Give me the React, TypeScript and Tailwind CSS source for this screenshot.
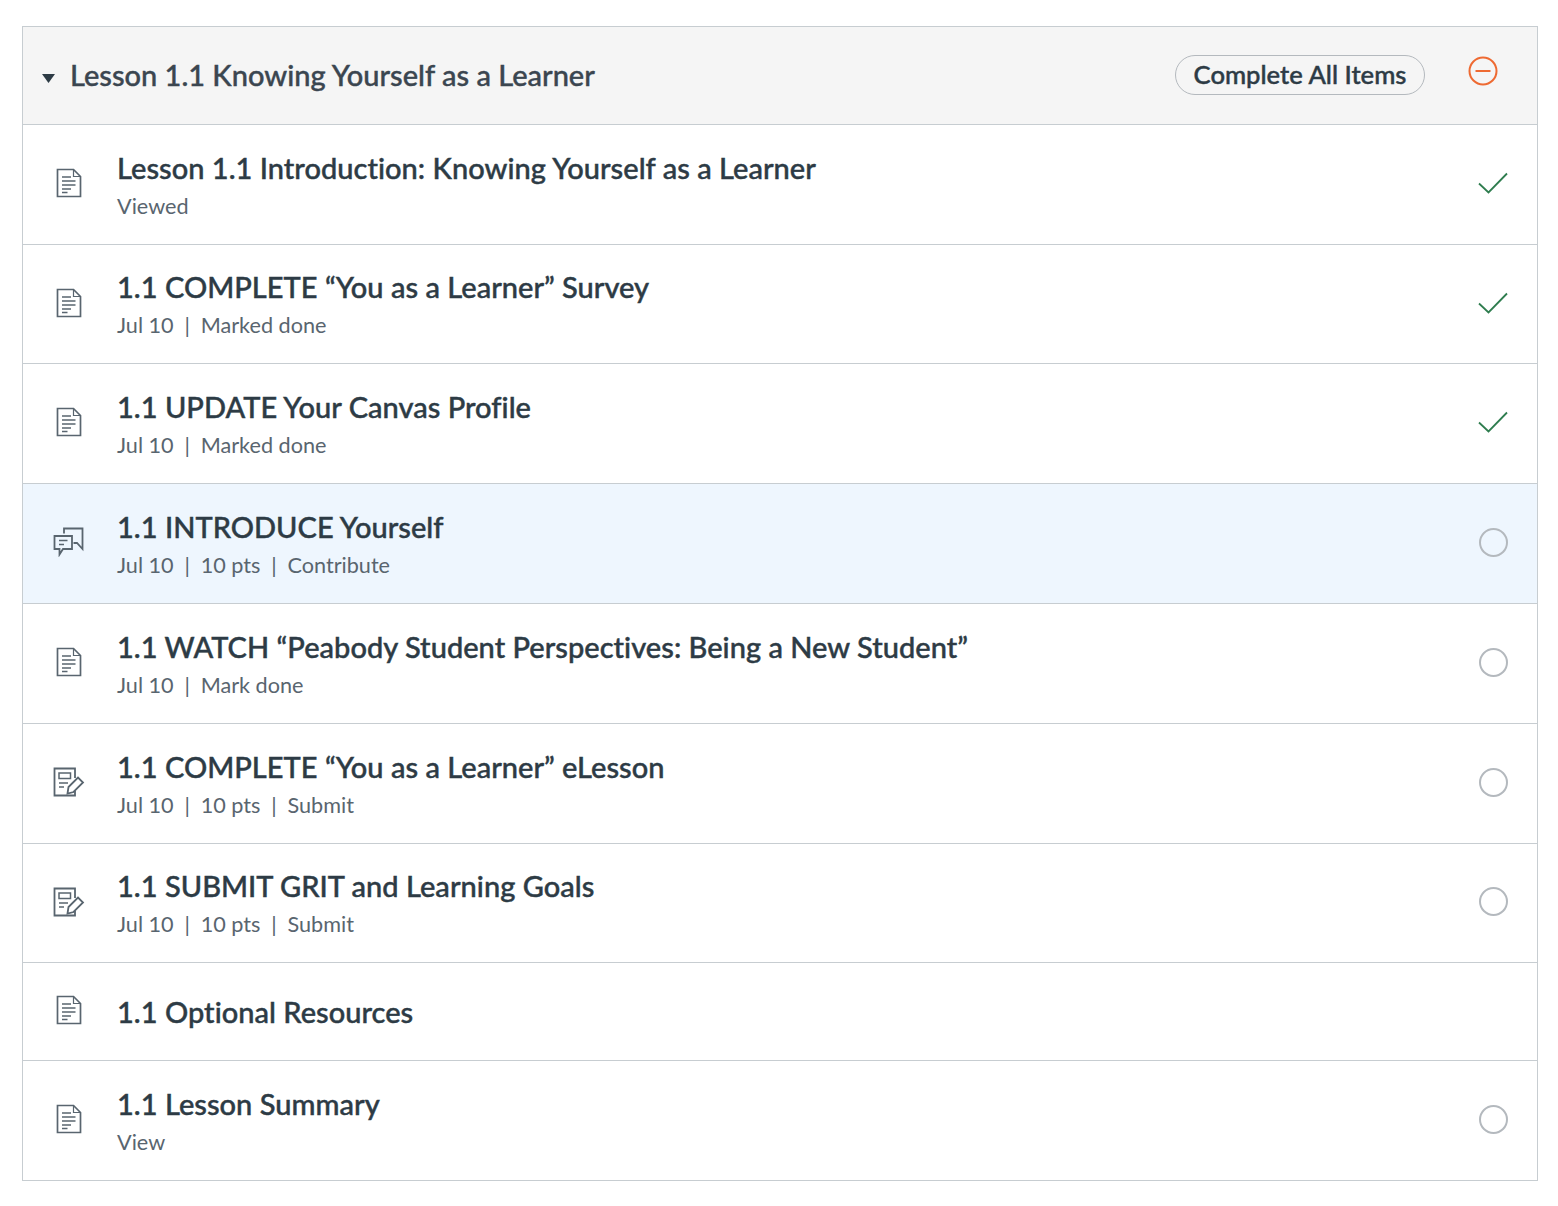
import React from 'react';

type Status = 'done' | 'open' | 'none';
type Kind = 'page' | 'discussion' | 'assignment';

interface Item {
  title: string;
  meta: string[];
  kind: Kind;
  status: Status;
  height: string;
  active?: boolean;
}

const items: Item[] = [
  { title: 'Lesson 1.1 Introduction: Knowing Yourself as a Learner', meta: ['Viewed'], kind: 'page', status: 'done', height: 'h-[120px]' },
  { title: '1.1 COMPLETE “You as a Learner” Survey', meta: ['Jul 10', 'Marked done'], kind: 'page', status: 'done', height: 'h-[119px]' },
  { title: '1.1 UPDATE Your Canvas Profile', meta: ['Jul 10', 'Marked done'], kind: 'page', status: 'done', height: 'h-[120px]' },
  { title: '1.1 INTRODUCE Yourself', meta: ['Jul 10', '10 pts', 'Contribute'], kind: 'discussion', status: 'open', height: 'h-[120px]', active: true },
  { title: '1.1 WATCH “Peabody Student Perspectives: Being a New Student”', meta: ['Jul 10', 'Mark done'], kind: 'page', status: 'open', height: 'h-[120px]' },
  { title: '1.1 COMPLETE “You as a Learner” eLesson', meta: ['Jul 10', '10 pts', 'Submit'], kind: 'assignment', status: 'open', height: 'h-[120px]' },
  { title: '1.1 SUBMIT GRIT and Learning Goals', meta: ['Jul 10', '10 pts', 'Submit'], kind: 'assignment', status: 'open', height: 'h-[119px]' },
  { title: '1.1 Optional Resources', meta: [], kind: 'page', status: 'none', height: 'h-[98px]' },
  { title: '1.1 Lesson Summary', meta: ['View'], kind: 'page', status: 'open', height: 'h-[120px]' },
];

const PageIcon = () => (
  <svg width="26" height="30" viewBox="0 0 26 30" fill="none" stroke="#59656f" strokeWidth="1.7" className="mb-[3px]">
    <path d="M1.5 1.5H17.5L24.5 8.5V28.5H1.5Z" />
    <path d="M17.5 1.5V8.5H24.5" strokeWidth="1.2" />
    <path d="M6 9H15M6 13H19.5M6 17H19.5M6 21H15M6 24.5H11.5" strokeWidth="1.4" />
  </svg>
);

const DiscussionIcon = () => (
  <svg width="32" height="30" viewBox="0 0 32 30" fill="none" stroke="#59656f" strokeWidth="1.8" className="ml-[-3px] mb-[3px]">
    <path d="M11 6.5V1.5H29.5V22L24 16H20.5" />
    <path d="M1.5 9H19V22H10L6.5 27.5V22H1.5Z" />
    <path d="M6 13.5H14.5M6 17.5H11" strokeWidth="1.4" />
  </svg>
);

const AssignmentIcon = () => (
  <svg width="32" height="30" viewBox="0 0 32 30" fill="none" stroke="#59656f" strokeWidth="1.8" className="ml-[-3px] mb-[3px]">
    <path d="M22 11V1.5H1.5V28.5H22V24" />
    <rect x="6" y="6" width="11.5" height="5.5" strokeWidth="1.5" />
    <path d="M6 16H15M6 20H11" strokeWidth="1.4" />
    <path d="M14.5 26.5L15.5 20L25 10.5L30 15.5L20.5 25Z" />
  </svg>
);

const KindIcon = ({ kind }: { kind: Kind }) => {
  if (kind === 'discussion') return <DiscussionIcon />;
  if (kind === 'assignment') return <AssignmentIcon />;
  return <PageIcon />;
};

const StatusIcon = ({ status }: { status: Status }) => {
  if (status === 'done') {
    return (
      <svg width="30" height="22" viewBox="0 0 30 22" fill="none" stroke="#2f7d4f" strokeWidth="1.8" className="mb-[3px]">
        <path d="M1 11.5L10.5 20.5L29 1.5" />
      </svg>
    );
  }
  if (status === 'open') {
    return <div className="w-[29px] h-[29px] mb-[3px] rounded-full border-2 border-[#b4b9be]" />;
  }
  return null;
};

const Row = ({ item }: { item: Item }) => (
  <div className={`flex items-center border-t border-[#c7cdd1] ${item.height} ${item.active ? 'bg-[#eef6fe]' : 'bg-white'}`}>
    <div className="w-[94px] pl-[33px] flex items-center flex-shrink-0">
      <KindIcon kind={item.kind} />
    </div>
    <div className={`flex-1 min-w-0 ${item.meta.length > 0 ? 'pt-[1px]' : ''}`}>
      <div className="font-['Lato_Medium','Lato',sans-serif] text-[29px] leading-[36px] tracking-[0.03px] text-[#2d3b45] [-webkit-text-stroke:0.45px_#2d3b45]">
        {item.title}
      </div>
      {item.meta.length > 0 && (
        <div className="mt-[5px] flex items-center text-[21.65px] leading-[30px] text-[#59656f]">
          {item.meta.map((m, i) => (
            <React.Fragment key={m}>
              {i > 0 && <span className="mx-[10.8px]">|</span>}
              <span>{m}</span>
            </React.Fragment>
          ))}
        </div>
      )}
    </div>
    <div className="w-[60px] mr-[14px] flex items-center justify-center flex-shrink-0">
      <StatusIcon status={item.status} />
    </div>
  </div>
);

export default function App() {
  return (
    <div className="w-[1558px] h-[1206px] bg-white pt-[26px] px-[22px] font-['Lato','Open_Sans',sans-serif]">
      <div className="w-[1516px] border border-[#c7cdd1]">
        <div className="h-[97px] bg-[#f5f5f5] flex items-center">
          <svg width="13" height="9" viewBox="0 0 13 9" className="ml-[19px] mt-[6px] fill-[#2d3b45]">
            <path d="M0 0H13L6.5 9Z" />
          </svg>
          <span className="ml-[15px] mb-[2px] font-['Lato_Medium','Lato',sans-serif] text-[29px] text-[#3b4650] [-webkit-text-stroke:0.4px_#3b4650]">
            Lesson 1.1 Knowing Yourself as a Learner
          </span>
          <button className="ml-auto mb-[2px] w-[250px] h-[40px] rounded-full border border-[#b4b9be] font-['Lato_Medium','Lato',sans-serif] text-[25.6px] text-[#2d3b45] [-webkit-text-stroke:0.45px_#2d3b45] flex items-center justify-center">
            Complete All Items
          </button>
          <svg width="30" height="30" viewBox="0 0 30 30" fill="none" stroke="#ee6a32" strokeWidth="2" className="ml-[43px] mr-[39px] mb-[10px]">
            <circle cx="15" cy="15" r="13.5" />
            <path d="M7.5 15H22.5" />
          </svg>
        </div>
        {items.map((item) => (
          <Row key={item.title} item={item} />
        ))}
      </div>
    </div>
  );
}
